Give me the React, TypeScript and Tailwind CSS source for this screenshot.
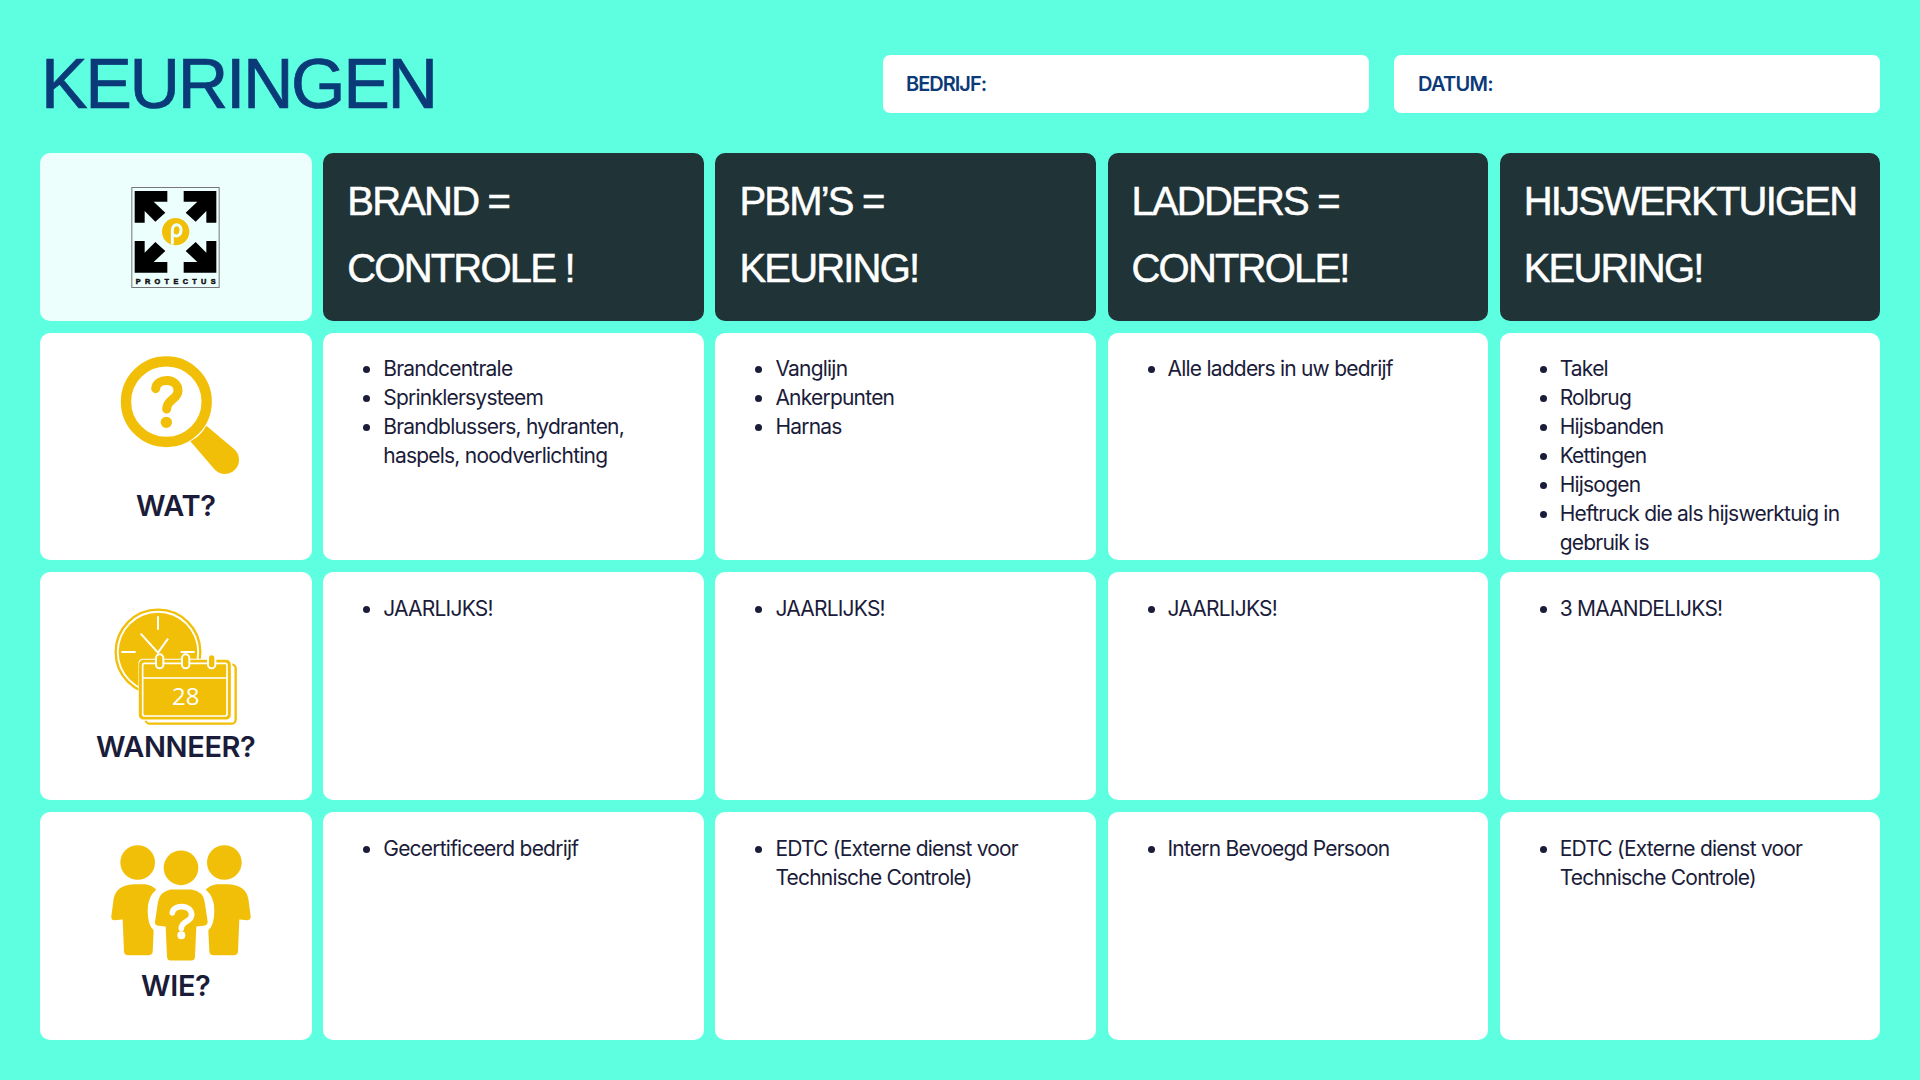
const Y = "#F2BF08";
const columns = [
  { head: ["BRAND =", "CONTROLE !"], wat: ["Brandcentrale", "Sprinklersysteem", "Brandblussers, hydranten, haspels, noodverlichting"], wanneer: ["JAARLIJKS!"], wie: ["Gecertificeerd bedrijf"] },
  { head: ["PBM’S =", "KEURING!"], wat: ["Vanglijn", "Ankerpunten", "Harnas"], wanneer: ["JAARLIJKS!"], wie: ["EDTC (Externe dienst voor Technische Controle)"] },
  { head: ["LADDERS =", "CONTROLE!"], wat: ["Alle ladders in uw bedrijf"], wanneer: ["JAARLIJKS!"], wie: ["Intern Bevoegd Persoon"] },
  { head: ["HIJSWERKTUIGEN", "KEURING!"], wat: ["Takel", "Rolbrug", "Hijsbanden", "Kettingen", "Hijsogen", "Heftruck die als hijswerktuig in gebruik is"], wanneer: ["3 MAANDELIJKS!"], wie: ["EDTC (Externe dienst voor Technische Controle)"] },
];

function Logo() {
  const tl = "105,65 203,65 203,97 162,97 197,130 167,157 135,125 135,160 105,160";
  return (
    <svg width="89" height="101" viewBox="95 53 265 303">
      <rect x="96.5" y="54.5" width="262" height="300" fill="#ECFFFD" stroke="#777" strokeWidth="3" />
      <polygon points={tl} fill="#000" />
      <polygon points={tl} fill="#000" transform="translate(455 0) scale(-1 1)" />
      <polygon points={tl} fill="#000" transform="translate(0 375) scale(1 -1)" />
      <polygon points={tl} fill="#000" transform="translate(455 375) scale(-1 -1)" />
      <circle cx="228" cy="187" r="41" fill={Y} />
      <path d="M218 222 V182 C218 160 246 162 244 184 C243 200 230 202 224 198" fill="none" stroke="#ECFFFD" strokeWidth="9" strokeLinecap="round" />
      <text x="108" y="343" fontSize="22" fontWeight="700" textLength="240" stroke="#111" strokeWidth="1.5" fill="#111" fontFamily="'Liberation Sans', sans-serif">PROTECTUS</text>
    </svg>
  );
}

function Magnifier() {
  return (
    <svg width="120" height="120" viewBox="90 45 360 360" className="translate-x-[4px]">
      <circle cx="229" cy="185" r="121" fill="none" stroke={Y} strokeWidth="31" />
      <path d="M349 257 L433 328 A42 42 0 0 1 376 391 L301 304 Q332 288 349 257Z" fill={Y} />
      <path d="M197 146 C200 112 264 112 264 152 C264 178 230 178 230 207" fill="none" stroke={Y} strokeWidth="27" strokeLinecap="round" />
      <circle cx="229" cy="247" r="17" fill={Y} />
    </svg>
  );
}

function Clock() {
  return (
    <svg width="125" height="120" viewBox="100 50 375 360">
      <circle cx="235" cy="185" r="127" fill="none" stroke={Y} strokeWidth="7" />
      <circle cx="235" cy="185" r="118" fill={Y} />
      <g stroke="#fff" strokeWidth="6" fill="none">
        <path d="M235 78 V118 M125 185 H168 M303 185 H345" />
        <path d="M183 130 L235 187 L265 145" />
      </g>
      <rect x="198" y="222" width="270" height="178" rx="12" fill="#fff" stroke={Y} strokeWidth="7" />
      <rect x="176" y="205" width="282" height="186" rx="14" fill="#fff" />
      <rect x="181" y="212" width="269" height="172" rx="10" fill={Y} stroke={Y} strokeWidth="7" />
      <rect x="189" y="219" width="253" height="158" rx="6" fill={Y} stroke="#fff" strokeWidth="5" />
      <path d="M189 263 H442" stroke="#fff" strokeWidth="5" />
      {[240, 318, 396].map((x) => (
        <rect key={x} x={x - 11} y="192" width="22" height="42" rx="11" fill={Y} stroke="#fff" strokeWidth="6" />
      ))}
      <text x="318" y="344" fontSize="72" textAnchor="middle" fill="#fff" fontFamily="'Open Sans', sans-serif">28</text>
    </svg>
  );
}

function People() {
  const side = "M130 162 H165 Q185 165 198 178 Q172 200 172 240 Q172 285 190 300 L187 365 Q186 375 175 375 H112 Q102 375 101 365 L97 268 L72 270 Q62 270 63 258 L70 205 Q78 165 130 162Z";
  return (
    <svg width="140" height="116" viewBox="62 45 420 347" className="translate-x-[5px]">
      <circle cx="142" cy="97" r="52" fill={Y} />
      <circle cx="402" cy="97" r="52" fill={Y} />
      <circle cx="272" cy="113" r="52" fill={Y} />
      <path d={side} fill={Y} />
      <path d={side} fill={Y} transform="translate(544 0) scale(-1 1)" />
      <path d="M240 178 H305 Q340 185 343 215 L352 275 Q352 285 340 287 L318 289 L314 380 Q314 391 303 391 H240 Q231 391 230 380 L226 289 L204 287 Q192 285 194 275 L203 215 Q208 185 240 178Z" fill={Y} />
      <path d="M246 248 C248 222 304 222 304 254 C304 276 273 272 273 294" fill="none" stroke="#fff" strokeWidth="17" strokeLinecap="round" />
      <circle cx="273" cy="315" r="12" fill="#fff" />
    </svg>
  );
}

function Bullets({ items, top }: { items: string[]; top: string }) {
  return (
    <div className={`bg-white rounded-[10px] pl-[60px] pr-4 overflow-hidden ${top}`}>
      <ul className="list-disc text-[21px] leading-[29px] tracking-[-0.78px] text-[#1B1C3A] font-['Inter',sans-serif]">
        {items.map((t) => (
          <li key={t}>{t}</li>
        ))}
      </ul>
    </div>
  );
}

function RowHead({ icon, label, top, gap }: { icon: React.ReactNode; label: string; top: string; gap: string }) {
  return (
    <div className={`bg-white rounded-[10px] flex flex-col items-center ${top}`}>
      {icon}
      <div className={`text-[29px] leading-[34px] font-semibold text-[#1B1C3A] font-['Inter',sans-serif] tracking-[-0.4px] ${gap}`}>{label}</div>
    </div>
  );
}

export default function App() {
  return (
    <div className="w-[1920px] h-[1080px] bg-[#5DFFE0] px-10 pt-[55px] pb-10 flex flex-col overflow-hidden">
      <div className="flex items-center gap-[25px] h-[58px] mb-[40px]">
        <h1 className="flex-1 pl-px text-[70px] leading-none text-[#0B3A78] tracking-[-2.4px] [-webkit-text-stroke:0.7px_#0B3A78] font-['Liberation_Sans',sans-serif]">KEURINGEN</h1>
        <div className="w-[486px] h-[58px] bg-white rounded-[7px] flex items-center pl-[23px] text-[20px] font-semibold text-[#0B3A78] tracking-[-1px] font-['Inter',sans-serif]">BEDRIJF:</div>
        <div className="w-[486px] h-[58px] bg-white rounded-[7px] flex items-center pl-[24px] text-[20px] font-semibold text-[#0B3A78] tracking-[-0.7px] font-['Inter',sans-serif]">DATUM:</div>
      </div>
      <div className="grid grid-cols-[271.5px_repeat(4,380.375px)] grid-rows-[168px_227px_228px_228px] gap-x-[11.75px] gap-y-3">
        <div className="bg-[#ECFFFD] rounded-[10px] flex items-center justify-center">
          <Logo />
        </div>
        {columns.map((c) => (
          <div key={c.head[0]} className="bg-[#203336] rounded-[10px] pl-6 pt-[15px] text-white text-[40px] leading-[67px] tracking-[-1.8px] [-webkit-text-stroke:0.5px_#fff] font-['Liberation_Sans',sans-serif]">
            <div>{c.head[0]}</div>
            <div>{c.head[1]}</div>
          </div>
        ))}
        <RowHead icon={<Magnifier />} label="WAT?" top="pt-[22px]" gap="mt-[14px]" />
        {columns.map((c) => (
          <Bullets key={c.head[0]} items={c.wat} top="pt-[21px]" />
        ))}
        <RowHead icon={<Clock />} label="WANNEER?" top="pt-[35px]" gap="mt-[3px]" />
        {columns.map((c) => (
          <Bullets key={c.head[0]} items={c.wanneer} top="pt-[22px]" />
        ))}
        <RowHead icon={<People />} label="WIE?" top="pt-[33px]" gap="mt-[8px]" />
        {columns.map((c) => (
          <Bullets key={c.head[0]} items={c.wie} top="pt-[22px]" />
        ))}
      </div>
    </div>
  );
}
